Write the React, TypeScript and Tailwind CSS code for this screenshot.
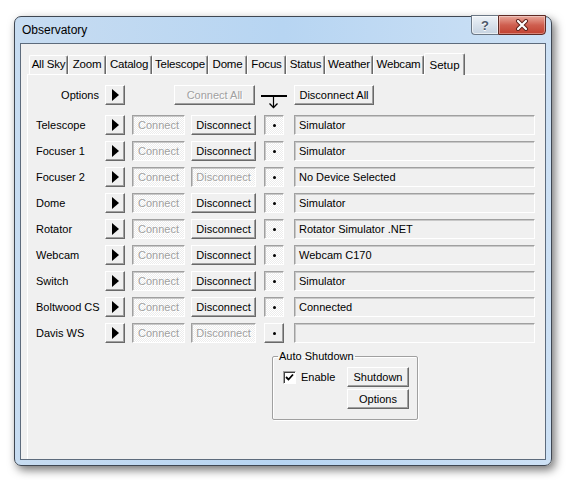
import React from 'react';

// Win classic control looks
const RAISED =
  'border border-t-white border-l-white border-b-[#696969] border-r-[#696969] shadow-[inset_-1px_-1px_#a0a0a0] bg-[#f0f0f0]';
const SUNKEN =
  'border border-t-[#a0a0a0] border-l-[#a0a0a0] border-b-white border-r-white shadow-[inset_1px_1px_#c8c8c8]';
const HATCH =
  'bg-[repeating-conic-gradient(#ffffff_0%_25%,#ececec_0%_50%)] bg-[length:2px_2px]';
const DIS_TEXT = 'text-[#a0a0a0] [text-shadow:1px_1px_#ffffff]';

const TABS: { label: string; w: string; active?: boolean }[] = [
  { label: 'All Sky', w: 'w-[39px]' },
  { label: 'Zoom', w: 'w-[38px]' },
  { label: 'Catalog', w: 'w-[46px]' },
  { label: 'Telescope', w: 'w-[56px]' },
  { label: 'Dome', w: 'w-[39px]' },
  { label: 'Focus', w: 'w-[39px]' },
  { label: 'Status', w: 'w-[39px]' },
  { label: 'Weather', w: 'w-[48px]' },
  { label: 'Webcam', w: 'w-[51px]' },
  { label: 'Setup', w: 'w-[41px]', active: true },
];

type Device = {
  name: string;
  canDisconnect: boolean;
  pressed: boolean;
  value: string;
};

const DEVICES: Device[] = [
  { name: 'Telescope', canDisconnect: true, pressed: true, value: 'Simulator' },
  { name: 'Focuser 1', canDisconnect: true, pressed: true, value: 'Simulator' },
  { name: 'Focuser 2', canDisconnect: false, pressed: true, value: 'No Device Selected' },
  { name: 'Dome', canDisconnect: true, pressed: true, value: 'Simulator' },
  { name: 'Rotator', canDisconnect: true, pressed: true, value: 'Rotator Simulator .NET' },
  { name: 'Webcam', canDisconnect: true, pressed: true, value: 'Webcam C170' },
  { name: 'Switch', canDisconnect: true, pressed: true, value: 'Simulator' },
  { name: 'Boltwood CS', canDisconnect: true, pressed: true, value: 'Connected' },
  { name: 'Davis WS', canDisconnect: false, pressed: false, value: '' },
];

function ArrowButton() {
  return (
    <div className={`${RAISED} w-[20px] h-[20px] flex items-center justify-center`}>
      <svg width="8" height="12" viewBox="0 0 8 12">
        <path d="M1 0 L8 6 L1 12 Z" fill="#000" />
      </svg>
    </div>
  );
}

function DotBox({ pressed }: { pressed: boolean }) {
  return (
    <div
      className={`${pressed ? `${SUNKEN} ${HATCH}` : RAISED} w-[20px] h-[20px] flex items-center justify-center`}
    >
      <div className="w-[3px] h-[3px] rounded-full bg-black" />
    </div>
  );
}

function DeviceRow({ d }: { d: Device }) {
  return (
    <div className="flex items-center h-[20px]">
      <div className="w-[69px]">{d.name}</div>
      <ArrowButton />
      <div
        className={`${SUNKEN} ${HATCH} ${DIS_TEXT} ml-[7px] w-[53px] h-[20px] flex items-center justify-center`}
      >
        Connect
      </div>
      {d.canDisconnect ? (
        <div className={`${RAISED} ml-[6px] w-[65px] h-[20px] flex items-center justify-center`}>
          Disconnect
        </div>
      ) : (
        <div
          className={`${SUNKEN} ${HATCH} ${DIS_TEXT} ml-[6px] w-[65px] h-[20px] flex items-center justify-center`}
        >
          Disconnect
        </div>
      )}
      <div className="ml-[8px]">
        <DotBox pressed={d.pressed} />
      </div>
      <div
        className={`${SUNKEN} ml-[10px] w-[241px] h-[20px] flex items-center pl-[4px] bg-[#f0f0f0]`}
      >
        {d.value}
      </div>
    </div>
  );
}

export default function App() {
  return (
    <div className="w-[566px] h-[480px] bg-white pt-[16px] pl-[14px] font-['Liberation_Sans',Arial,sans-serif] text-[11px] text-black">
      <div className="relative w-[538px] h-[450px] rounded-[7px] border border-[#3f4752] bg-gradient-to-r from-[#c7dcf1] via-[#b7d5f2] to-[#cde1f5] shadow-[3px_4px_10px_rgba(0,0,0,0.55)] flex flex-col">
        {/* title bar */}
        <div className="h-[26px] flex items-center pl-[7px] text-[12px] text-black">Observatory</div>

        {/* caption buttons */}
        <div className="absolute top-[-2px] right-[5px] flex">
          <div className="w-[27px] h-[20px] rounded-bl-[4px] border border-[#6b7785] border-r-0 bg-gradient-to-b from-[#eef3f8] via-[#d9e2ec] to-[#c6d3e1] flex items-center justify-center shadow-[inset_0_0_0_1px_rgba(255,255,255,0.6)]">
            <span className="text-[13px] font-bold text-[#4b5768] [text-shadow:0_1px_#ffffff] leading-none">?</span>
          </div>
          <div className="w-[48px] h-[20px] rounded-br-[4px] border border-[#5e2a24] bg-gradient-to-b from-[#e8a89c] via-[#cf5f50] to-[#c1402f] flex items-center justify-center shadow-[inset_0_0_0_1px_rgba(255,255,255,0.35)]">
            <svg width="14" height="12" viewBox="0 0 14 12">
              <path d="M3 2 L11 10 M11 2 L3 10" stroke="#5a1e18" strokeWidth="4" strokeLinecap="round" />
              <path d="M3 2 L11 10 M11 2 L3 10" stroke="#ffffff" strokeWidth="2.2" strokeLinecap="round" />
            </svg>
          </div>
        </div>

        {/* client area */}
        <div className="flex-1 mx-[5px] mb-[5px] border border-[#5d6b7c] bg-[#f0f0f0] pt-[9px] overflow-hidden flex flex-col">
          {/* tabs */}
          <div className="flex items-end h-[21px] pl-[8px] relative z-10">
            {TABS.map((t) =>
              t.active ? (
                <div
                  key={t.label}
                  className={`${t.w} h-[22px] -mb-[1px] bg-[#f0f0f0] rounded-t-[2px] border-t border-l border-white border-r border-r-[#696969] shadow-[inset_-1px_0_#a0a0a0] flex items-start justify-center pt-[3px] text-[11.5px]`}
                >
                  {t.label}
                </div>
              ) : (
                <div
                  key={t.label}
                  className={`${t.w} h-[19px] rounded-t-[2px] border-t border-l border-white border-r border-r-[#696969] shadow-[inset_-1px_0_#a0a0a0] flex items-center justify-center text-[11.5px] tracking-[-0.2px]`}
                >
                  {t.label}
                </div>
              )
            )}
          </div>

          {/* tab page */}
          <div className="flex-1 ml-[6px] border-t border-l border-white pt-[10px] pl-[8px] flex flex-col">
            {/* options row */}
            <div className="flex items-start h-[20px]">
              <div className="w-[63px] h-[20px] flex items-center justify-end">Options</div>
              <div className="ml-[6px]">
                <ArrowButton />
              </div>
              <div
                className={`${RAISED} ${DIS_TEXT} ml-[49px] w-[81px] h-[20px] flex items-center justify-center`}
              >
                Connect All
              </div>
              <svg className="ml-[6px] overflow-visible" width="26" height="24" viewBox="0 0 26 24">
                <path d="M0 11 H26" stroke="#000" strokeWidth="2" />
                <path d="M12.5 11 V23" stroke="#000" strokeWidth="1.2" />
                <path d="M8.5 18.5 L12.5 22.5 L16.5 18.5" stroke="#000" strokeWidth="1.3" fill="none" />
              </svg>
              <div className={`${RAISED} ml-[7px] w-[80px] h-[20px] flex items-center justify-center`}>
                Disconnect All
              </div>
            </div>

            {/* device rows */}
            <div className="mt-[10px] flex flex-col gap-[6px]">
              {DEVICES.map((d) => (
                <DeviceRow key={d.name} d={d} />
              ))}
            </div>

            {/* auto shutdown group */}
            <fieldset className="mt-[7px] ml-[236px] w-[146px] h-[70px] border border-[#a0a0a0] shadow-[1px_1px_#ffffff,inset_1px_1px_#ffffff] rounded-[2px]">
              <legend className="ml-[5px] px-[1px] leading-[13px]">Auto Shutdown</legend>
              <div className="flex pl-[10px] pr-[8px] pt-[4px]">
                <div className="flex items-center h-[20px]">
                  <div className="w-[13px] h-[13px] bg-white border border-t-[#a0a0a0] border-l-[#a0a0a0] border-b-white border-r-white shadow-[inset_1px_1px_#404040] flex items-center justify-center">
                    <svg width="9" height="9" viewBox="0 0 9 9">
                      <path d="M1 4 L3.5 6.5 L8 1.5" stroke="#000" strokeWidth="1.8" fill="none" />
                    </svg>
                  </div>
                  <span className="ml-[5px]">Enable</span>
                </div>
                <div className="ml-auto flex flex-col gap-[2px]">
                  <div className={`${RAISED} w-[62px] h-[20px] flex items-center justify-center`}>Shutdown</div>
                  <div className={`${RAISED} w-[62px] h-[20px] flex items-center justify-center`}>Options</div>
                </div>
              </div>
            </fieldset>
          </div>
        </div>
      </div>
    </div>
  );
}
